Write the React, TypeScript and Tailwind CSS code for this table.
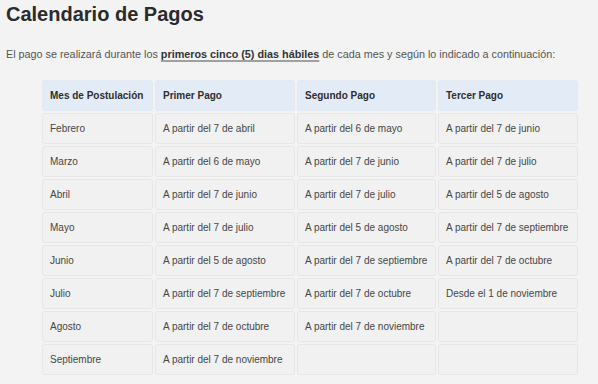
const headers = ["Mes de Postulación", "Primer Pago", "Segundo Pago", "Tercer Pago"];

const rows = [
  ["Febrero", "A partir del 7 de abril", "A partir del 6 de mayo", "A partir del 7 de junio"],
  ["Marzo", "A partir del 6 de mayo", "A partir del 7 de junio", "A partir del 7 de julio"],
  ["Abril", "A partir del 7 de junio", "A partir del 7 de julio", "A partir del 5 de agosto"],
  ["Mayo", "A partir del 7 de julio", "A partir del 5 de agosto", "A partir del 7 de septiembre"],
  ["Junio", "A partir del 5 de agosto", "A partir del 7 de septiembre", "A partir del 7 de octubre"],
  ["Julio", "A partir del 7 de septiembre", "A partir del 7 de octubre", "Desde el 1 de noviembre"],
  ["Agosto", "A partir del 7 de octubre", "A partir del 7 de noviembre", ""],
  ["Septiembre", "A partir del 7 de noviembre", "", ""],
];

export default function App() {
  return (
    <div className="min-h-[384px] w-[598px] bg-[#f3f3f3] font-['Liberation_Sans',Arial,sans-serif]">
      <h1 className="px-[6px] pt-[2px] text-[20px] font-bold leading-[24px] text-[#2b2b2b]">
        Calendario de Pagos
      </h1>
      <p className="mt-[22px] whitespace-nowrap px-[6px] text-[10.8px] leading-[12px] text-[#555]">
        El pago se realizará durante los{" "}
        <span className="font-bold text-[#333] underline decoration-[#a0a0a0] decoration-2 underline-offset-2">
          primeros cinco (5) dias hábiles
        </span>{" "}
        de cada mes y según lo indicado a continuación:
      </p>

      {/* tabla de pagos */}
      <div className="ml-[42px] mt-[20px] grid w-[536px] grid-cols-[111px_140px_139px_140px] gap-[2px] pb-[9px]">
        {headers.map((h) => (
          <div
            key={h}
            className="flex h-[31px] items-center whitespace-nowrap rounded-[3px] border border-[#e3e9f1] bg-[#e3ebf6] px-[7px] text-[10px] font-bold text-[#2e2e2e]"
          >
            {h}
          </div>
        ))}
        {rows.map((row, i) =>
          row.map((cell, j) => (
            <div
              key={i + "-" + j}
              className="flex h-[31px] items-center whitespace-nowrap rounded-[3px] border border-[#e6e6e6] bg-[#f1f1f1] px-[7px] text-[10px] text-[#464646]"
            >
              {cell}
            </div>
          ))
        )}
      </div>
    </div>
  );
}
